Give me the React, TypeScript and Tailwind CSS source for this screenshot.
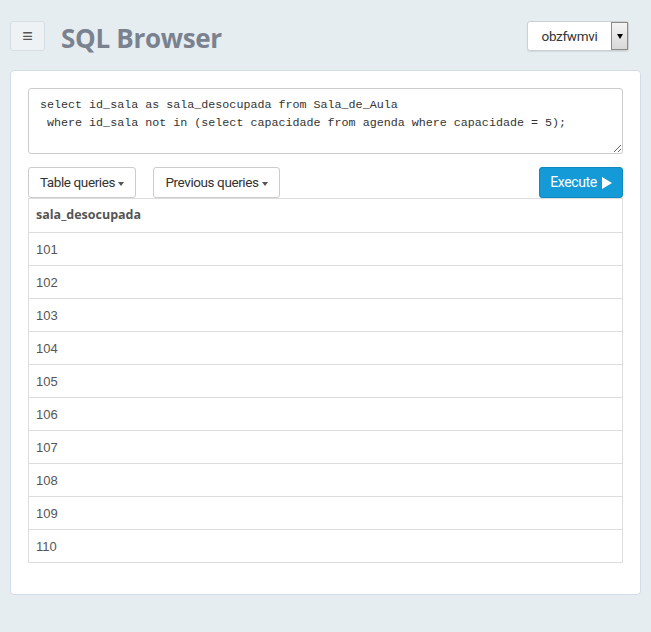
import React from "react";

const rows = [101, 102, 103, 104, 105, 106, 107, 108, 109, 110];

const query =
  "select id_sala as sala_desocupada from Sala_de_Aula\n where id_sala not in (select capacidade from agenda where capacidade = 5);";

function Caret() {
  return <span className="ml-[3px] inline-block align-middle border-x-[3px] border-t-[4px] border-x-transparent border-t-[#555]" />;
}

export default function App() {
  return (
    <div className="min-h-[632px] w-full bg-[#e6edf1] pt-[21px] font-['Liberation_Sans',Arial,sans-serif]">
      {/* top bar */}
      <div className="flex items-center justify-between pl-[10px] pr-[22px]">
        <div className="flex items-center gap-[16px]">
          <button className="flex h-[30px] w-[35px] items-center justify-center rounded-[3px] border border-[#d6dee4] bg-[#eef2f5] text-[18px] font-bold leading-none text-[#555]">
            ≡
          </button>
          <h1 className="mt-[3px] font-['Open_Sans',sans-serif] text-[26px] font-bold leading-none tracking-[-0.3px] text-[#7a828f]">
            SQL Browser
          </h1>
        </div>
        <div className="flex h-[30px] w-[102px] items-stretch rounded-[3px] border border-[#cfcfcf] bg-white shadow-[0_1px_1px_rgba(0,0,0,0.08)]">
          <div className="flex flex-1 items-center justify-center font-['Roboto',sans-serif] text-[13.5px] tracking-[-0.3px] text-[#333]">
            obzfwmvi
          </div>
          <div className="flex w-[17px] items-center justify-center border border-[#8a8a8a] bg-gradient-to-b from-[#f4f4f4] to-[#d8d8d8]">
            <span className="inline-block border-x-[3px] border-t-[5px] border-x-transparent border-t-black" />
          </div>
        </div>
      </div>

      {/* panel */}
      <div className="mx-[10px] mt-[19px] rounded-[4px] border border-[#d3dbe6] bg-white px-[17px] pb-[31px] pt-[17px]">
        <textarea
          readOnly
          defaultValue={query}
          spellCheck={false}
          className="block h-[66px] w-full resize-y rounded-[3px] border border-[#cccccc] px-[11px] pt-[7px] font-['Liberation_Mono',monospace] text-[11.7px] leading-[18px] text-[#333] outline-none"
        />

        <div className="mt-[13px] flex items-center justify-between font-['Roboto',sans-serif] text-[13.5px] tracking-[-0.4px]">
          <div className="flex gap-[17px]">
            <button className="h-[31px] w-[108px] rounded-[3px] border border-[#cccccc] bg-white text-[#333]">
              Table queries<Caret />
            </button>
            <button className="h-[31px] w-[127px] rounded-[3px] border border-[#cccccc] bg-white text-[#333]">
              Previous queries<Caret />
            </button>
          </div>
          <button className="flex h-[31px] w-[84px] items-center justify-center gap-[5px] rounded-[3px] border border-[#0f87bf] bg-[#149bd7] text-[14px] text-white">
            Execute
            <span className="inline-block border-y-[6px] border-l-[10px] border-y-transparent border-l-white" />
          </button>
        </div>

        <table className="w-full border-collapse border border-[#dddddd] text-[13px] text-[#555]">
          <thead>
            <tr>
              <th className="h-[34px] px-[7px] text-left font-['Open_Sans',sans-serif] text-[12.5px] font-bold text-[#555]">
                sala_desocupada
              </th>
            </tr>
          </thead>
          <tbody>
            {rows.map((r) => (
              <tr key={r} className="border-t border-[#dddddd]">
                <td className="h-[33px] px-[7px] pt-[2px]">{r}</td>
              </tr>
            ))}
          </tbody>
        </table>
      </div>
    </div>
  );
}
